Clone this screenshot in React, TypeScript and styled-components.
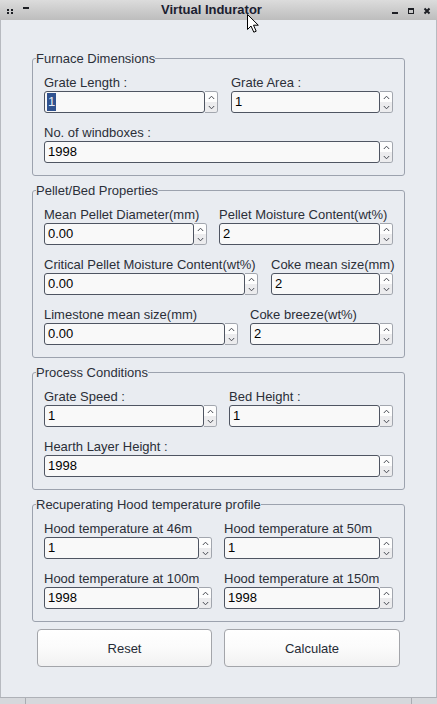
import React from 'react';
import styled, { createGlobalStyle } from 'styled-components';

const GlobalStyle = createGlobalStyle`
  html, body { margin: 0; padding: 0; background: #e9ecf1; }
  body { font-family: "Liberation Sans", Arial, sans-serif; font-size: 13px; }
  #root { width: 437px; height: 704px; }
  * { box-sizing: border-box; }
`;

const Window = styled.div`
  position: relative;
  width: 437px;
  height: 704px;
  display: flex;
  flex-direction: column;
  background: #e9ecf1;
  overflow: hidden;
`;

const TitleBar = styled.div`
  height: 20px;
  flex: none;
  display: flex;
  align-items: stretch;
  background: linear-gradient(#dcdcdc, #bdbdbd);
`;

const TitleSide = styled.div<{ $w: number }>`
  width: ${(p) => p.$w}px;
  flex: none;
  position: relative;
`;

const TitleText = styled.div`
  flex: 1;
  text-align: center;
  font-weight: bold;
  font-size: 13px;
  line-height: 20px;
  color: #1b2030;
`;

const TitleIcons = styled.svg`
  display: block;
`;

const Body = styled.div`
  flex: 1;
  display: flex;
  flex-direction: column;
  gap: 7px;
  padding: 31px 31px 0 31px;
  border-left: 1px solid #b7bac0;
  border-right: 1px solid #b7bac0;
`;

const Group = styled.fieldset`
  margin: 0;
  padding: 0;
  min-width: 0;
  border: 1px solid #9ca2ae;
  border-radius: 3px;
`;

const Legend = styled.legend`
  padding: 0;
  margin-left: 3px;
  font-size: 13px;
  line-height: 15px;
  color: #2c303a;
`;

const GroupInner = styled.div`
  display: flex;
  flex-direction: column;
  gap: 11px;
  padding: 8px 11px 12px 11px;
`;

const Row = styled.div<{ $cols: string; $gap: number }>`
  display: grid;
  grid-template-columns: ${(p) => p.$cols};
  column-gap: ${(p) => p.$gap}px;
`;

const Field = styled.div`
  display: flex;
  flex-direction: column;
  min-width: 0;
`;

const Label = styled.div`
  font-size: 13px;
  line-height: 17px;
  height: 16px;
  margin-bottom: 1px;
  color: #2b2f38;
  white-space: nowrap;
`;

const Spin = styled.div`
  display: flex;
  height: 22px;
`;

const SpinField = styled.div`
  flex: 1;
  min-width: 0;
  border: 1px solid #4f5562;
  border-radius: 3px;
  background: #f9f9f9;
  padding-left: 2px;
  display: flex;
  align-items: center;
  font-size: 13px;
  color: #000;
  line-height: 18px;
`;

const Value = styled.span`
  padding-left: 1px;
`;

const Selected = styled.span`
  background: #30528f;
  color: #e8edf5;
  padding: 0 1px;
  line-height: 18px;
`;

const Arrows = styled.div`
  width: 13px;
  flex: none;
  border: 1px solid #a2a6ae;
  border-left: none;
  border-radius: 0 3px 3px 0;
  display: flex;
  flex-direction: column;
  overflow: hidden;
`;

const ArrowHalf = styled.div<{ $down?: boolean }>`
  flex: 1;
  display: flex;
  align-items: center;
  justify-content: center;
  background: ${(p) => (p.$down ? '#ececee' : '#fdfdfd')};
`;

const ButtonRow = styled.div`
  display: grid;
  grid-template-columns: 175px 1fr;
  column-gap: 12px;
  padding: 0 5px;
  margin-top: 0;
`;

const Button = styled.button`
  height: 38px;
  border: 1px solid #a3a5aa;
  border-radius: 4px;
  background: linear-gradient(#ffffff 0%, #fbfbfb 50%, #f1f1f2 100%);
  font-family: "Liberation Sans", Arial, sans-serif;
  font-size: 13px;
  color: #262b36;
  padding: 0;
`;

const BottomBar = styled.div`
  height: 7px;
  flex: none;
  border-top: 1px solid #aeb1b7;
  background: #d6d8dc;
  display: grid;
  grid-template-columns: 26px 1fr 26px;
`;

const BottomSeg = styled.div`
  border-right: 1px solid #a9acb2;
  &:last-child { border-right: none; border-left: 1px solid #a9acb2; }
  &:nth-child(2) { border-right: none; }
`;

const Cursor = styled.svg`
  position: absolute;
  left: 246px;
  top: 13px;
`;

const Chevron = ({ down }: { down?: boolean }) => (
  <svg width="7" height="5" viewBox="0 0 7 5">
    <polyline
      points={down ? '0.8,1 3.5,3.8 6.2,1' : '0.8,4 3.5,1.2 6.2,4'}
      fill="none"
      stroke="#4a4d55"
      strokeWidth="1"
    />
  </svg>
);

type FieldDef = { label: string; value: string; selected?: boolean };
type RowDef = { cols: string; gap: number; fields: FieldDef[] };
type GroupDef = { title: string; rows: RowDef[] };

const groups: GroupDef[] = [
  {
    title: 'Furnace Dimensions',
    rows: [
      {
        cols: '174px 1fr',
        gap: 13,
        fields: [
          { label: 'Grate Length :', value: '1', selected: true },
          { label: 'Grate Area :', value: '1' },
        ],
      },
      { cols: '1fr', gap: 0, fields: [{ label: 'No. of windboxes :', value: '1998' }] },
    ],
  },
  {
    title: 'Pellet/Bed Properties',
    rows: [
      {
        cols: '163px 1fr',
        gap: 12,
        fields: [
          { label: 'Mean Pellet Diameter(mm)', value: '0.00' },
          { label: 'Pellet Moisture Content(wt%)', value: '2' },
        ],
      },
      {
        cols: '214px 1fr',
        gap: 13,
        fields: [
          { label: 'Critical Pellet Moisture Content(wt%)', value: '0.00' },
          { label: 'Coke mean size(mm)', value: '2' },
        ],
      },
      {
        cols: '194px 1fr',
        gap: 12,
        fields: [
          { label: 'Limestone mean size(mm)', value: '0.00' },
          { label: 'Coke breeze(wt%)', value: '2' },
        ],
      },
    ],
  },
  {
    title: 'Process Conditions',
    rows: [
      {
        cols: '173px 1fr',
        gap: 12,
        fields: [
          { label: 'Grate Speed :', value: '1' },
          { label: 'Bed Height :', value: '1' },
        ],
      },
      { cols: '1fr', gap: 0, fields: [{ label: 'Hearth Layer Height :', value: '1998' }] },
    ],
  },
  {
    title: 'Recuperating Hood temperature profile',
    rows: [
      {
        cols: '168px 1fr',
        gap: 12,
        fields: [
          { label: 'Hood temperature at 46m', value: '1' },
          { label: 'Hood temperature at 50m', value: '1' },
        ],
      },
      {
        cols: '168px 1fr',
        gap: 12,
        fields: [
          { label: 'Hood temperature at 100m', value: '1998' },
          { label: 'Hood temperature at 150m', value: '1998' },
        ],
      },
    ],
  },
];

const SpinBox = ({ value, selected }: { value: string; selected?: boolean }) => (
  <Spin>
    <SpinField>{selected ? <Selected>{value}</Selected> : <Value>{value}</Value>}</SpinField>
    <Arrows>
      <ArrowHalf>
        <Chevron />
      </ArrowHalf>
      <ArrowHalf $down>
        <Chevron down />
      </ArrowHalf>
    </Arrows>
  </Spin>
);

export default function App() {
  return (
    <>
      <GlobalStyle />
      <Window>
        <TitleBar>
          <TitleSide $w={34}>
            <TitleIcons width="34" height="20" viewBox="0 0 34 20">
              <rect x="7" y="9" width="2" height="2" fill="#1d1f24" />
              <rect x="11" y="9" width="2" height="2" fill="#1d1f24" />
              <rect x="7" y="12" width="2" height="2" fill="#1d1f24" />
              <rect x="11" y="12" width="2" height="2" fill="#1d1f24" />
              <rect x="23" y="7" width="6" height="2" fill="#1d1f24" />
            </TitleIcons>
          </TitleSide>
          <TitleText>Virtual Indurator</TitleText>
          <TitleSide $w={48}>
            <TitleIcons width="48" height="20" viewBox="0 0 48 20">
              <rect x="3" y="12" width="6" height="2" fill="#1d1f24" />
              <rect x="19.5" y="8.5" width="5" height="5" fill="none" stroke="#1d1f24" strokeWidth="1" />
              <rect x="19" y="8" width="6" height="2" fill="#1d1f24" />
              <path d="M35.5 8.5 L40.5 13.5 M40.5 8.5 L35.5 13.5" stroke="#1d1f24" strokeWidth="2" />
            </TitleIcons>
          </TitleSide>
        </TitleBar>
        <Body>
          {groups.map((g) => (
            <Group key={g.title}>
              <Legend>{g.title}</Legend>
              <GroupInner>
                {g.rows.map((r, i) => (
                  <Row key={i} $cols={r.cols} $gap={r.gap}>
                    {r.fields.map((f) => (
                      <Field key={f.label}>
                        <Label>{f.label}</Label>
                        <SpinBox value={f.value} selected={f.selected} />
                      </Field>
                    ))}
                  </Row>
                ))}
              </GroupInner>
            </Group>
          ))}
          <ButtonRow>
            <Button>Reset</Button>
            <Button>Calculate</Button>
          </ButtonRow>
        </Body>
        <BottomBar>
          <BottomSeg />
          <BottomSeg />
          <BottomSeg />
        </BottomBar>
        <Cursor width="14" height="21" viewBox="0 0 14 21">
          <path
            d="M1.5 1.5 L1.5 16.5 L5 13 L7.8 19.2 L10.2 18.2 L7.5 12.2 L12.3 12.2 Z"
            fill="#ffffff"
            stroke="#000000"
            strokeWidth="1"
            strokeLinejoin="round"
          />
        </Cursor>
      </Window>
    </>
  );
}
